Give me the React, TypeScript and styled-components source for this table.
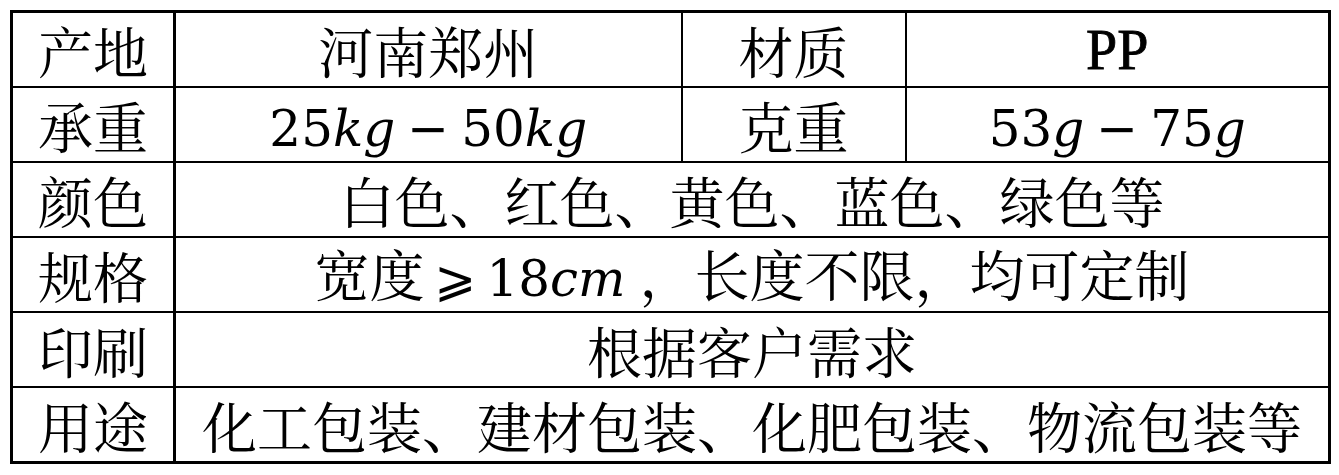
import React from "react";
import styled, { createGlobalStyle } from "styled-components";

const GlobalStyle = createGlobalStyle`
  body {
    margin: 0;
    background: #ffffff;
  }
`

const Sheet = styled.table`
  margin: 10px 0 0 10px;
  width: 1321px;
  border-collapse: collapse;
  table-layout: fixed;
  border: 3px solid #000;
  font-family: "Noto Serif CJK SC", "Noto Sans CJK SC", serif;
  font-size: 55px;
  color: #000;
`

const Cell = styled.td<{ $label?: boolean }>`
  border: 2px solid #000;
  border-right-width: ${p => (p.$label ? "3px" : "2px")};
  height: 73px;
  padding: 0;
  text-align: center;
  vertical-align: middle;
  line-height: 1;
  white-space: nowrap;
`

const Latin = styled.span`
  font-family: "Liberation Serif", serif;
  font-size: 56px;
  -webkit-text-stroke: 0.8px #000;
  vertical-align: 5px;
`

const MathText = styled.span`
  font-family: "DejaVu Serif", serif;
  font-size: 50px;
`

const Var = styled.i`
  font-style: italic;
`

const Op = styled.span<{ $gap?: number }>`
  font-family: "DejaVu Sans", "DejaVu Serif", sans-serif;
  margin: 0 ${p => p.$gap ?? 12}px;
`

const Range = ({ from, to, unit }: { from: string; to: string; unit: string }) => (
  <MathText>
    {from}<Var>{unit}</Var>
    <Op>−</Op>
    {to}<Var>{unit}</Var>
  </MathText>
)

const rows: { label: string; value: React.ReactNode }[] = [
  { label: "颜色", value: "白色、红色、黄色、蓝色、绿色等" },
  {
    label: "规格",
    value: (
      <>
        宽度
        <MathText>
          <Op $gap={10}>⩾</Op>18<Var>cm</Var>
        </MathText>
        {" "}，长度不限，均可定制
      </>
    ),
  },
  { label: "印刷", value: "根据客户需求" },
  { label: "用途", value: "化工包装、建材包装、化肥包装、物流包装等" },
]

const App = () => {
  return (
    <>
      <GlobalStyle />
      <Sheet>
        <colgroup>
          <col style={{ width: 163 }} />
          <col style={{ width: 507 }} />
          <col style={{ width: 224 }} />
          <col />
        </colgroup>
        <tbody>
          <tr>
            <Cell $label>产地</Cell>
            <Cell>河南郑州</Cell>
            <Cell>材质</Cell>
            <Cell><Latin>PP</Latin></Cell>
          </tr>
          <tr>
            <Cell $label>承重</Cell>
            <Cell><Range from="25" to="50" unit="kg" /></Cell>
            <Cell>克重</Cell>
            <Cell><Range from="53" to="75" unit="g" /></Cell>
          </tr>
          {rows.map(r => (
            <tr key={r.label}>
              <Cell $label>{r.label}</Cell>
              <Cell colSpan={3}>{r.value}</Cell>
            </tr>
          ))}
        </tbody>
      </Sheet>
    </>
  );
}

export default App;
